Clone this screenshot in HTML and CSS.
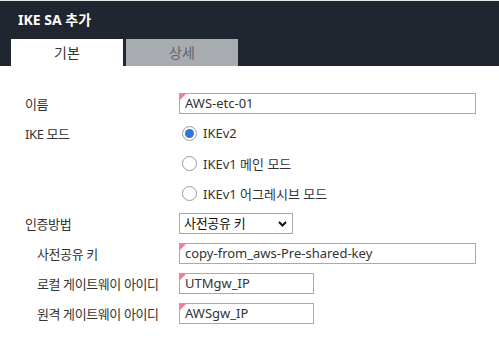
FILE: index.html
```html
<!DOCTYPE html>
<html lang="ko">
<head>
    <meta charset="UTF-8">
    <meta name="viewport" content="width=device-width, initial-scale=1.0">
    <title>IKE SA 추가</title>
    <link rel="stylesheet" href="styles.css">
</head>
<body>
    <div class="header">
        <div class="title">IKE SA 추가</div>
        <div class="tabs">
            <div class="tab active">기본</div>
            <div class="tab">상세</div>
        </div>
    </div>

    <form class="form">
        <label class="label" for="name">이름</label>
        <span class="field"><input type="text" id="name" class="input long" value="AWS-etc-01"></span>

        <div class="label">IKE 모드</div>
        <label class="radio"><input type="radio" name="mode" value="ikev2" checked> IKEv2</label>
        <div></div>
        <label class="radio"><input type="radio" name="mode" value="main"> IKEv1 메인 모드</label>
        <div></div>
        <label class="radio"><input type="radio" name="mode" value="aggressive"> IKEv1 어그레시브 모드</label>

        <label class="label" for="auth">인증방법</label>
        <span class="select-wrap">
            <select id="auth" class="select">
                <option>사전공유 키</option>
                <option>인증서</option>
            </select>
            <svg class="chevron" width="9" height="6" viewBox="0 0 9 6"><path d="M1 1 L4.5 4.5 L8 1" fill="none" stroke="#111" stroke-width="2"/></svg>
        </span>

        <label class="label sub" for="psk">사전공유 키</label>
        <span class="field"><input type="text" id="psk" class="input long" value="copy-from_aws-Pre-shared-key"></span>

        <label class="label sub" for="local">로컬 게이트웨이 아이디</label>
        <span class="field"><input type="text" id="local" class="input short" value="UTMgw_IP"></span>

        <label class="label sub" for="remote">원격 게이트웨이 아이디</label>
        <span class="field"><input type="text" id="remote" class="input short" value="AWSgw_IP"></span>
    </form>
</body>
</html>
```

FILE: styles.css
```css
body {
    margin: 0;
    background: #ffffff;
    font-family: "Noto Sans", "Noto Sans CJK KR", sans-serif;
    font-size: 13px;
    color: #333333;
}

.header {
    background-color: #1f2630;
    border-top: 1px solid #e9e9e9;
    height: 65px;
}

.title {
    color: #ffffff;
    font-weight: bold;
    font-size: 14px;
    height: 38px;
    line-height: 38px;
    padding-left: 18px;
}

.tabs {
    display: flex;
    gap: 3px;
    margin-left: 11px;
}

.tab {
    width: 112px;
    height: 27px;
    line-height: 27px;
    text-align: center;
    font-size: 14px;
    background-color: #a8acb0;
    color: #5c6570;
}

.tab.active {
    background-color: #ffffff;
    color: #333333;
}

.form {
    display: grid;
    grid-template-columns: 154px 1fr;
    grid-auto-rows: 30px;
    align-items: center;
    padding: 22px 0 0 25px;
    margin: 0;
}

.label {
    letter-spacing: -0.4px;
    color: #333333;
}

.label.sub {
    padding-left: 12px;
}

.field, .select-wrap {
    position: relative;
    display: inline-block;
    width: fit-content;
}

/* pink marker in the corner of text inputs */
.field::before {
    content: "";
    position: absolute;
    left: 1px;
    top: 1px;
    border-top: 6px solid #f07e9a;
    border-right: 6px solid transparent;
}

.input {
    box-sizing: border-box;
    height: 21px;
    border: 1px solid #aaaaaa;
    padding: 0 5px;
    font-family: inherit;
    font-size: 13px;
    color: #333333;
    outline: none;
}

.input.long {
    width: 297px;
}

.input.short {
    width: 135px;
}

.radio {
    display: flex;
    align-items: center;
    gap: 6px;
    padding-left: 3px;
}

.radio input {
    appearance: none;
    margin: 0;
    width: 15px;
    height: 15px;
    border: 1px solid #9a9a9a;
    border-radius: 50%;
    box-sizing: border-box;
    display: flex;
    align-items: center;
    justify-content: center;
}

.radio input:checked::after {
    content: "";
    width: 9px;
    height: 9px;
    border-radius: 50%;
    background-color: #2b78d0;
}

.select {
    appearance: none;
    box-sizing: border-box;
    width: 114px;
    height: 21px;
    border: 1px solid #aaaaaa;
    border-radius: 0;
    background: #ffffff;
    padding: 0 4px;
    font-family: inherit;
    font-size: 13px;
    color: #111111;
    letter-spacing: -0.3px;
}

.chevron {
    position: absolute;
    right: 6px;
    top: 8px;
}
```
